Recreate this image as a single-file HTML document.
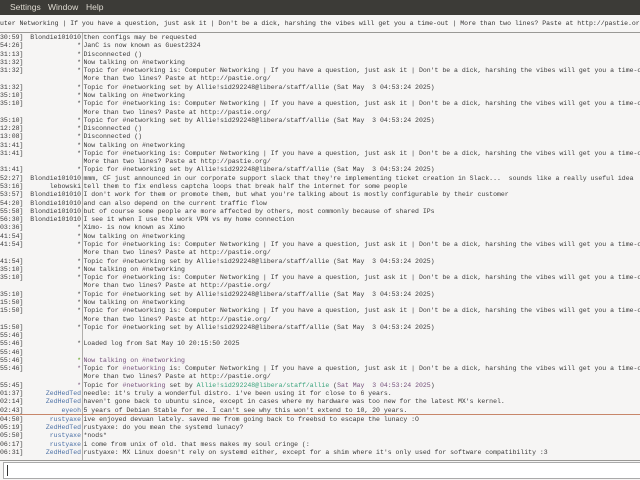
<!DOCTYPE html>
<html><head><meta charset="utf-8"><style>
html,body{margin:0;padding:0;width:640px;height:480px;overflow:hidden;background:#f6f5f4;}
#menu{position:absolute;left:0;top:0;width:640px;height:15px;background:#3c3b37;color:#dfdbd2;font:8.5px "Liberation Sans",sans-serif;}
#menu span{position:absolute;top:2px;}
#topic{position:absolute;left:0;top:16px;width:640px;height:16px;background:#f6f5f4;font:6.5px "Liberation Mono",monospace;color:#333;white-space:pre;line-height:16px;overflow:hidden;}
#chat{position:absolute;left:0;top:32px;width:640px;height:427px;background:#f6f5f4;border-top:1px solid #9a9996;border-bottom:1px solid #9a9996;overflow:hidden;}
#sep{position:absolute;left:82px;top:0;width:1px;height:428px;background:#b0aeab;}
.r{position:absolute;left:0;height:8.28px;width:640px;font:6.5px "Liberation Mono",monospace;line-height:8.28px;white-space:pre;color:#3a3a3a;}
.t{position:absolute;left:0;}
.n{position:absolute;right:559px;text-align:right;}
.m{position:absolute;left:83.5px;}
.b{color:#4a6fa5}.g{color:#4e9a06}.p{color:#75507b}.c{color:#3aa37c}
#marker{position:absolute;left:0;top:381px;width:640px;height:1px;background:#c7866a;}
#input{position:absolute;left:3px;top:462px;width:640px;height:15px;background:#fff;border:1px solid #aaa;}
#input i{position:absolute;left:3px;top:2px;width:1px;height:11px;background:#333;}
</style></head><body>
<div id="menu"><span style="left:-3px">r</span><span style="left:10px">Settings</span><span style="left:48px">Window</span><span style="left:86px">Help</span></div>
<div id="topic">uter Networking | If you have a question, just ask it | Don't be a dick, harshing the vibes will get you a time-out | More than two lines? Paste at http://pastie.org/</div>
<div id="chat"><div id="sep"></div><div id="marker"></div></div>
<div id="input"><i></i></div>
<div style="position:absolute;left:0;top:33px;width:640px;height:426px;overflow:hidden">
<div class="r" style="top:1px"><span class="t">30:59]</span><span class="n">Blondie101010</span><span class="m">then configs may be requested</span></div>
<div class="r" style="top:9.28px"><span class="t">54:26]</span><span class="n">*</span><span class="m">JanC is now known as Guest2324</span></div>
<div class="r" style="top:17.56px"><span class="t">31:13]</span><span class="n">*</span><span class="m">Disconnected ()</span></div>
<div class="r" style="top:25.84px"><span class="t">31:32]</span><span class="n">*</span><span class="m">Now talking on #networking</span></div>
<div class="r" style="top:34.12px"><span class="t">31:32]</span><span class="n">*</span><span class="m">Topic for #networking is: Computer Networking | If you have a question, just ask it | Don't be a dick, harshing the vibes will get you a time-out</span></div>
<div class="r" style="top:42.4px"><span class="m">More than two lines? Paste at http://pastie.org/</span></div>
<div class="r" style="top:50.68px"><span class="t">31:32]</span><span class="n">*</span><span class="m">Topic for #networking set by Allie!sid292248@libera/staff/allie (Sat May  3 04:53:24 2025)</span></div>
<div class="r" style="top:58.96px"><span class="t">35:10]</span><span class="n">*</span><span class="m">Now talking on #networking</span></div>
<div class="r" style="top:67.24px"><span class="t">35:10]</span><span class="n">*</span><span class="m">Topic for #networking is: Computer Networking | If you have a question, just ask it | Don't be a dick, harshing the vibes will get you a time-out</span></div>
<div class="r" style="top:75.52px"><span class="m">More than two lines? Paste at http://pastie.org/</span></div>
<div class="r" style="top:83.8px"><span class="t">35:10]</span><span class="n">*</span><span class="m">Topic for #networking set by Allie!sid292248@libera/staff/allie (Sat May  3 04:53:24 2025)</span></div>
<div class="r" style="top:92.08px"><span class="t">12:28]</span><span class="n">*</span><span class="m">Disconnected ()</span></div>
<div class="r" style="top:100.36px"><span class="t">13:08]</span><span class="n">*</span><span class="m">Disconnected ()</span></div>
<div class="r" style="top:108.64px"><span class="t">31:41]</span><span class="n">*</span><span class="m">Now talking on #networking</span></div>
<div class="r" style="top:116.92px"><span class="t">31:41]</span><span class="n">*</span><span class="m">Topic for #networking is: Computer Networking | If you have a question, just ask it | Don't be a dick, harshing the vibes will get you a time-out</span></div>
<div class="r" style="top:125.2px"><span class="m">More than two lines? Paste at http://pastie.org/</span></div>
<div class="r" style="top:133.48px"><span class="t">31:41]</span><span class="n">*</span><span class="m">Topic for #networking set by Allie!sid292248@libera/staff/allie (Sat May  3 04:53:24 2025)</span></div>
<div class="r" style="top:141.76px"><span class="t">52:27]</span><span class="n">Blondie101010</span><span class="m">mmm, CF just announced in our corporate support slack that they're implementing ticket creation in Slack...  sounds like a really useful idea</span></div>
<div class="r" style="top:150.04px"><span class="t">53:16]</span><span class="n">lebowski</span><span class="m">tell them to fix endless captcha loops that break half the internet for some people</span></div>
<div class="r" style="top:158.32px"><span class="t">53:57]</span><span class="n">Blondie101010</span><span class="m">I don't work for them or promote them, but what you're talking about is mostly configurable by their customer</span></div>
<div class="r" style="top:166.6px"><span class="t">54:20]</span><span class="n">Blondie101010</span><span class="m">and can also depend on the current traffic flow</span></div>
<div class="r" style="top:174.88px"><span class="t">55:58]</span><span class="n">Blondie101010</span><span class="m">but of course some people are more affected by others, most commonly because of shared IPs</span></div>
<div class="r" style="top:183.16px"><span class="t">56:30]</span><span class="n">Blondie101010</span><span class="m">I see it when I use the work VPN vs my home connection</span></div>
<div class="r" style="top:191.44px"><span class="t">03:36]</span><span class="n">*</span><span class="m">Ximo- is now known as Ximo</span></div>
<div class="r" style="top:199.72px"><span class="t">41:54]</span><span class="n">*</span><span class="m">Now talking on #networking</span></div>
<div class="r" style="top:208px"><span class="t">41:54]</span><span class="n">*</span><span class="m">Topic for #networking is: Computer Networking | If you have a question, just ask it | Don't be a dick, harshing the vibes will get you a time-out</span></div>
<div class="r" style="top:216.28px"><span class="m">More than two lines? Paste at http://pastie.org/</span></div>
<div class="r" style="top:224.56px"><span class="t">41:54]</span><span class="n">*</span><span class="m">Topic for #networking set by Allie!sid292248@libera/staff/allie (Sat May  3 04:53:24 2025)</span></div>
<div class="r" style="top:232.84px"><span class="t">35:10]</span><span class="n">*</span><span class="m">Now talking on #networking</span></div>
<div class="r" style="top:241.12px"><span class="t">35:10]</span><span class="n">*</span><span class="m">Topic for #networking is: Computer Networking | If you have a question, just ask it | Don't be a dick, harshing the vibes will get you a time-out</span></div>
<div class="r" style="top:249.4px"><span class="m">More than two lines? Paste at http://pastie.org/</span></div>
<div class="r" style="top:257.68px"><span class="t">35:10]</span><span class="n">*</span><span class="m">Topic for #networking set by Allie!sid292248@libera/staff/allie (Sat May  3 04:53:24 2025)</span></div>
<div class="r" style="top:265.96px"><span class="t">15:50]</span><span class="n">*</span><span class="m">Now talking on #networking</span></div>
<div class="r" style="top:274.24px"><span class="t">15:50]</span><span class="n">*</span><span class="m">Topic for #networking is: Computer Networking | If you have a question, just ask it | Don't be a dick, harshing the vibes will get you a time-out</span></div>
<div class="r" style="top:282.52px"><span class="m">More than two lines? Paste at http://pastie.org/</span></div>
<div class="r" style="top:290.8px"><span class="t">15:50]</span><span class="n">*</span><span class="m">Topic for #networking set by Allie!sid292248@libera/staff/allie (Sat May  3 04:53:24 2025)</span></div>
<div class="r" style="top:299.08px"><span class="t">55:46]</span></div>
<div class="r" style="top:307.36px"><span class="t">55:46]</span><span class="n">*</span><span class="m">Loaded log from Sat May 10 20:15:50 2025</span></div>
<div class="r" style="top:315.64px"><span class="t">55:46]</span></div>
<div class="r" style="top:323.92px"><span class="t">55:46]</span><span class="n g">*</span><span class="m p">Now talking on #networking</span></div>
<div class="r" style="top:332.2px"><span class="t">55:46]</span><span class="n p">*</span><span class="m">Topic for <span class="p">#networking</span> is: Computer Networking | If you have a question, just ask it | Don't be a dick, harshing the vibes will get you a time-out</span></div>
<div class="r" style="top:340.48px"><span class="m">More than two lines? Paste at http://pastie.org/</span></div>
<div class="r" style="top:348.76px"><span class="t">55:45]</span><span class="n p">*</span><span class="m">Topic for <span class="p">#networking</span> set by <span class="c">Allie!sid292248@libera/staff/allie</span> (<span class="p">Sat May  3 04:53:24 2025</span>)</span></div>
<div class="r" style="top:357.04px"><span class="t">01:37]</span><span class="n b">ZedHedTed</span><span class="m">needle: it's truly a wonderful distro. i've been using it for close to 6 years.</span></div>
<div class="r" style="top:365.32px"><span class="t">02:14]</span><span class="n b">ZedHedTed</span><span class="m">haven't gone back to ubuntu since, except in cases where my hardware was too new for the latest MX's kernel.</span></div>
<div class="r" style="top:373.6px"><span class="t">02:43]</span><span class="n b">eyeoh</span><span class="m">5 years of Debian Stable for me. I can't see why this won't extend to 10, 20 years.</span></div>
<div class="r" style="top:382.88px"><span class="t">04:50]</span><span class="n b">rustyaxe</span><span class="m">ive enjoyed devuan lately. saved me from going back to freebsd to escape the lunacy :O</span></div>
<div class="r" style="top:391.16px"><span class="t">05:19]</span><span class="n b">ZedHedTed</span><span class="m">rustyaxe: do you mean the systemd lunacy?</span></div>
<div class="r" style="top:399.44px"><span class="t">05:50]</span><span class="n b">rustyaxe</span><span class="m">*nods*</span></div>
<div class="r" style="top:407.72px"><span class="t">06:17]</span><span class="n b">rustyaxe</span><span class="m">i come from unix of old. that mess makes my soul cringe (:</span></div>
<div class="r" style="top:416px"><span class="t">06:31]</span><span class="n b">ZedHedTed</span><span class="m">rustyaxe: MX Linux doesn't rely on systemd either, except for a shim where it's only used for software compatibility :3</span></div>
</div>
</body></html>
